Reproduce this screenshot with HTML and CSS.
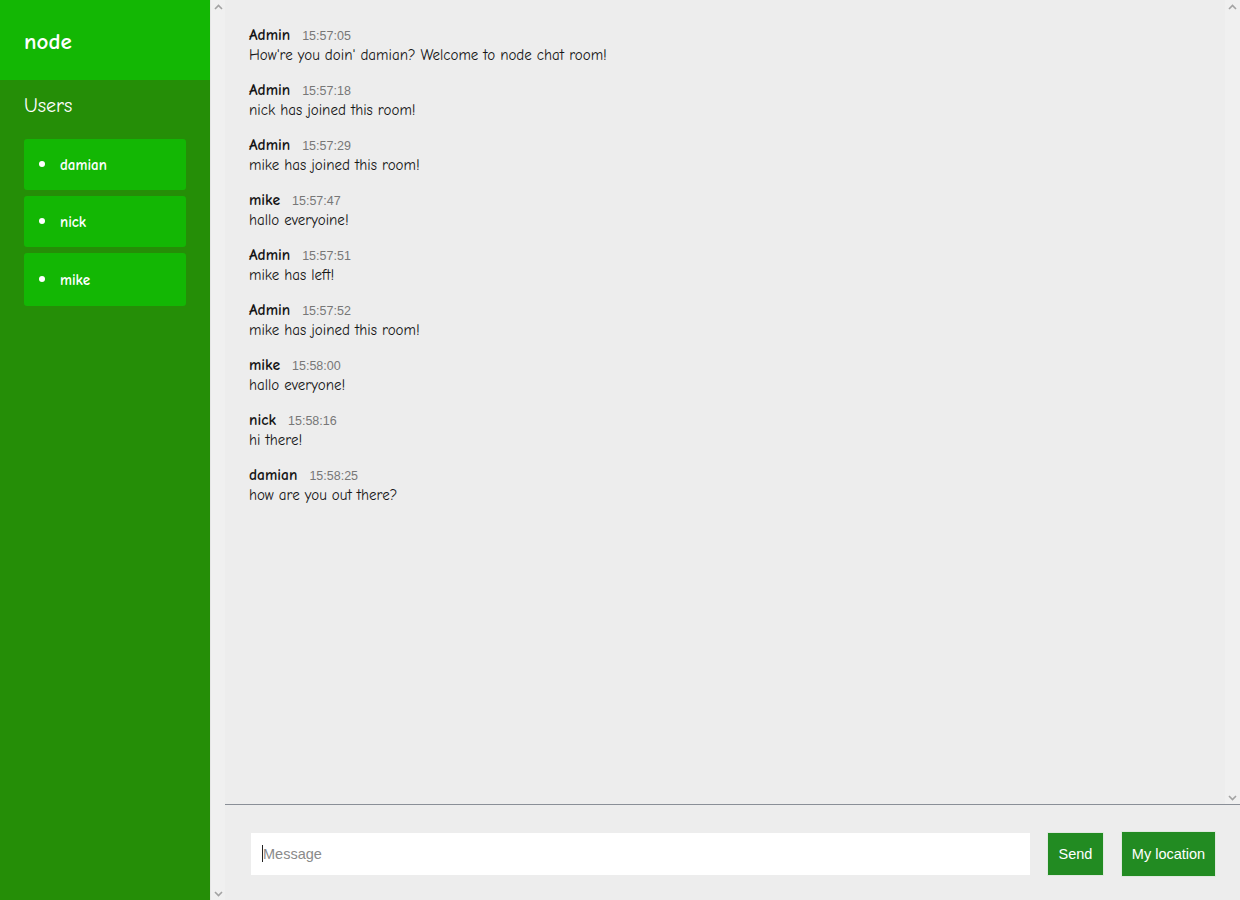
FILE: index.html
```html
<!DOCTYPE html>
<html lang="en">
<head>
<meta charset="utf-8">
<title>Chat | node</title>
<link rel="stylesheet" href="styles.css">
</head>
<body>
<div class="app">
  <aside class="sidebar">
    <div class="brand">node</div>
    <h3 class="users-title">Users</h3>
    <ul class="users">
      <li class="user"><span class="dot"></span>damian</li>
      <li class="user"><span class="dot"></span>nick</li>
      <li class="user"><span class="dot"></span>mike</li>
    </ul>
  </aside>
  <div class="scrollbar full">
    <svg class="arrow" width="9" height="6" viewBox="0 0 9 6"><polyline points="1,5 4.5,1.5 8,5" fill="none" stroke="#a3a3a3" stroke-width="1.6"/></svg>
    <svg class="arrow" width="9" height="6" viewBox="0 0 9 6"><polyline points="1,1 4.5,4.5 8,1" fill="none" stroke="#a3a3a3" stroke-width="1.6"/></svg>
  </div>
  <main class="main">
    <div class="messages-wrap">
      <div class="messages">
        <div class="msg"><div class="meta"><span class="name">Admin</span><span class="time">15:57:05</span></div><p class="text">How're you doin' damian? Welcome to node chat room!</p></div>
        <div class="msg"><div class="meta"><span class="name">Admin</span><span class="time">15:57:18</span></div><p class="text">nick has joined this room!</p></div>
        <div class="msg"><div class="meta"><span class="name">Admin</span><span class="time">15:57:29</span></div><p class="text">mike has joined this room!</p></div>
        <div class="msg"><div class="meta"><span class="name">mike</span><span class="time">15:57:47</span></div><p class="text">hallo everyoine!</p></div>
        <div class="msg"><div class="meta"><span class="name">Admin</span><span class="time">15:57:51</span></div><p class="text">mike has left!</p></div>
        <div class="msg"><div class="meta"><span class="name">Admin</span><span class="time">15:57:52</span></div><p class="text">mike has joined this room!</p></div>
        <div class="msg"><div class="meta"><span class="name">mike</span><span class="time">15:58:00</span></div><p class="text">hallo everyone!</p></div>
        <div class="msg"><div class="meta"><span class="name">nick</span><span class="time">15:58:16</span></div><p class="text">hi there!</p></div>
        <div class="msg"><div class="meta"><span class="name">damian</span><span class="time">15:58:25</span></div><p class="text">how are you out there?</p></div>
      </div>
      <div class="scrollbar">
        <svg class="arrow" width="9" height="6" viewBox="0 0 9 6"><polyline points="1,5 4.5,1.5 8,5" fill="none" stroke="#a3a3a3" stroke-width="1.6"/></svg>
        <svg class="arrow" width="9" height="6" viewBox="0 0 9 6"><polyline points="1,1 4.5,4.5 8,1" fill="none" stroke="#a3a3a3" stroke-width="1.6"/></svg>
      </div>
    </div>
    <form class="composer">
      <div class="input"><span class="caret"></span><span class="placeholder">Message</span></div>
      <button type="button" class="btn send">Send</button>
      <button type="button" class="btn loc">My location</button>
    </form>
  </main>
</div>
</body>
</html>
```
FILE: styles.css
```css
* { box-sizing: border-box; }
html, body { margin: 0; padding: 0; }
body {
  width: 1240px;
  height: 900px;
  overflow: hidden;
  background: #ededed;
  font-family: "Comic Sans MS", "Comic Neue", "Open Sans", sans-serif;
  color: #161616;
}
.app { display: flex; height: 900px; }

.sidebar {
  width: 210px;
  flex: none;
  background: #258e07;
  color: #fff;
}
.brand {
  height: 80px;
  background: #13b704;
  padding-left: 24px;
  font-size: 23px;
  font-weight: 700;
  line-height: 84px;
}
.users-title {
  margin: 0;
  padding: 13px 24px 0;
  font-size: 20px;
  font-weight: 400;
  line-height: 26px;
}
.users {
  list-style: none;
  margin: 20px 24px 0;
  padding: 0;
  display: flex;
  flex-direction: column;
  gap: 6px;
}
.user {
  height: 51px;
  background: #13b704;
  border-radius: 3px;
  display: flex;
  align-items: center;
  padding-left: 15px;
  font-size: 15px;
  font-weight: 700;
}
.user:last-child { height: 53px; }
.dot {
  width: 6px;
  height: 6px;
  border-radius: 50%;
  background: #fff;
  margin-right: 15px;
  margin-top: -1px;
}

.scrollbar {
  width: 15px;
  flex: none;
  background: #f0f0f0;
  display: flex;
  flex-direction: column;
  justify-content: space-between;
  align-items: center;
  padding: 4px 0 3px;
}
.scrollbar.full { border-left: 1px solid #e6e6e6; }

.main {
  flex: 1;
  display: flex;
  flex-direction: column;
  min-width: 0;
}
.messages-wrap {
  height: 805px;
  display: flex;
  border-bottom: 1px solid #8a8f97;
}
.messages {
  flex: 1;
  padding: 26px 24px 0;
}
.msg { margin-bottom: 16px; }
.meta { display: flex; align-items: baseline; height: 19px; line-height: 18px; }
.name {
  font-weight: 700;
  font-size: 15.5px;
  margin-right: 12px;
}
.time {
  font-family: "Liberation Sans", Arial, sans-serif;
  font-size: 12.5px;
  color: #777;
}
.text {
  margin: 0;
  font-size: 15px;
  line-height: 20px;
}

.composer {
  flex: 1;
  display: flex;
  align-items: center;
  padding: 2px 24px 0 26px;
  gap: 17px;
  margin: 0;
}
.input {
  flex: 1;
  height: 42px;
  background: #fff;
  display: flex;
  align-items: center;
  padding-left: 11px;
  font-family: "Liberation Sans", Arial, sans-serif;
  font-size: 14.5px;
  color: #8a8a8a;
}
.caret {
  width: 1px;
  height: 17px;
  background: #222;
}
.btn {
  height: 44px;
  border: 1px solid #dfe9df;
  background: #228b22;
  color: #fff;
  font-family: "Liberation Sans", Arial, sans-serif;
  font-size: 14.5px;
  padding: 0;
  white-space: nowrap;
  flex: none;
}
.send { width: 57px; }
.loc { width: 95px; height: 46px; }
```
